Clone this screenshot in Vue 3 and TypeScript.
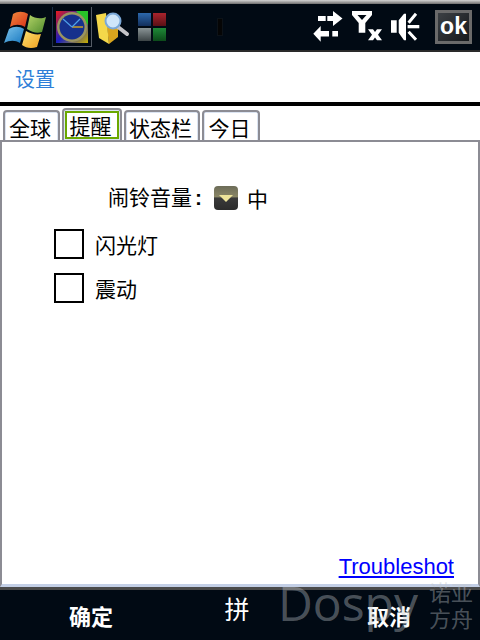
<template>
  <div class="screen">
    <div class="topstrip"></div>
    <header class="topbar">
      <svg class="start" width="50" height="44" viewBox="0 0 50 44">
        <defs>
          <filter id="soft"><feGaussianBlur stdDeviation="0.4" /></filter>
          <linearGradient id="flagR" x1="0" y1="0" x2="1" y2="1">
            <stop offset="0" stop-color="#f08a3c" />
            <stop offset="1" stop-color="#d8341c" />
          </linearGradient>
          <linearGradient id="flagG" x1="0" y1="0" x2="1" y2="1">
            <stop offset="0" stop-color="#b4d468" />
            <stop offset="1" stop-color="#4f8a2c" />
          </linearGradient>
          <linearGradient id="flagB" x1="0" y1="0" x2="1" y2="1">
            <stop offset="0" stop-color="#7cc4ec" />
            <stop offset="1" stop-color="#1878c0" />
          </linearGradient>
          <linearGradient id="flagY" x1="0" y1="0" x2="1" y2="1">
            <stop offset="0" stop-color="#fbe072" />
            <stop offset="1" stop-color="#f0a020" />
          </linearGradient>
        </defs>
        <g filter="url(#soft)">
          <path d="M11 9 C16 6 21 6 26 9 L23 22 C18 19 13 19 8 22 Z" fill="url(#flagR)" />
          <path d="M28 10 C33 14 40 14 44 12 L40 27 C35 29 30 27 25 24 Z" fill="url(#flagG)" />
          <path d="M7 24 C12 21 17 21 22 24 L18 38 C13 35 8 35 2 38 Z" fill="url(#flagB)" />
          <path d="M24 26 C29 29 35 30 39 29 L35 42 C29 44 24 43 20 40 Z" fill="url(#flagY)" />
        </g>
      </svg>
      <div class="task-active">
        <svg width="32" height="32" viewBox="0 0 32 32">
          <defs>
            <linearGradient id="clockBg" x1="0" y1="0" x2="1" y2="1">
              <stop offset="0" stop-color="#e81c1c" />
              <stop offset="0.5" stop-color="#1a20c0" />
              <stop offset="1" stop-color="#c8b000" />
            </linearGradient>
          </defs>
          <rect width="32" height="32" fill="url(#clockBg)" />
          <path d="M20 0 H32 V14 Z" fill="#28c428" />
          <circle cx="16" cy="16" r="15" fill="#9a9460" />
          <circle cx="16" cy="16" r="12.5" fill="#16308c" />
          <path d="M16 16 L27 16" stroke="#d8a820" stroke-width="1.4" />
          <path d="M16 16 L7 8 M16 16 L24 8" stroke="#4f9fe8" stroke-width="1.2" />
        </svg>
      </div>
      <svg class="finder" width="34" height="36" viewBox="0 0 34 36">
        <path d="M10 9 L22 14 V28 L13 35 Z" fill="#d9a51e" />
        <path d="M0 6 L10 4 L13 35 L3 29 Z" fill="#f4d84a" />
        <path d="M22 18 L31 25" stroke="#c4c4c8" stroke-width="4" stroke-linecap="round" />
        <circle cx="17" cy="12" r="7.5" fill="#cfe6fa" stroke="#7aa8d8" stroke-width="2" />
      </svg>
      <div class="tiles">
        <i class="tile t-blue"></i>
        <i class="tile t-red"></i>
        <i class="tile t-grey"></i>
        <i class="tile t-green"></i>
      </div>
      <span class="grip"></span>
      <div class="status">
        <svg width="30" height="34" viewBox="0 0 30 34" fill="#fff">
          <path d="M14.3 6 H20 V1 L29.5 8.5 L20 16 V11 H14.3 Z" />
          <path d="M5 6 H12.7 V11 H5 Z" />
          <path d="M0.3 23.7 L7.7 16 V21 H16 V26.5 H7.7 V31.7 Z" />
          <path d="M19.3 21 H25 V26.5 H19.3 Z" />
        </svg>
        <svg width="30" height="34" viewBox="0 0 30 34" fill="#fff">
          <path d="M0 1 H20 V5 L13.3 13 V22.7 H6.7 V13 L0 5 Z M5.5 5 L10 10 L14.5 5 Z" fill-rule="evenodd" />
          <path d="M16 19.3 H21 L23 22 L25 19.3 H30 L26 24.8 L30 30.3 H25 L23 27.6 L21 30.3 H16 L20 24.8 Z" />
        </svg>
        <svg width="29" height="34" viewBox="0 0 29 34" fill="#fff">
          <path d="M0 10.3 H5.7 V22.7 H0 Z M7.7 10.3 L13 3.7 H15 V30.3 H13 L7.7 22.7 Z" />
          <path d="M16.6 15 H28.3 V18.3 H16.6 Z" />
          <path d="M17.6 12.7 L25 3.7 M17.6 21.7 L25 29.7" stroke="#fff" stroke-width="3" fill="none" />
        </svg>
      </div>
      <div class="ok">ok</div>
    </header>

    <div class="title">设置</div>
    <div class="title-rule"></div>

    <nav class="tabs">
      <span
        v-for="t in tabs"
        :key="t.name"
        class="tab"
        :class="{ active: t.name === '提醒' }"
        :style="{ width: t.width + 'px' }"
      >
        <span class="tab-text">{{ t.name }}</span>
      </span>
    </nav>

    <main class="panel">
      <div class="volume">
        <span class="volume-label">闹铃音量<b>:</b></span>
        <span class="dropdown"><i></i></span>
        <span>中</span>
      </div>
      <label v-for="c in checks" :key="c" class="check">
        <span class="box"></span>
        <span>{{ c }}</span>
      </label>
      <a class="link">Troubleshot</a>
    </main>

    <footer class="softkeys">
      <span class="key">确定</span>
      <span class="ime">拼</span>
      <span class="key">取消</span>
    </footer>

    <div class="watermark">
      <span class="wm-word">Dospy</span>
      <span class="wm-cn">诺亚<br />方舟</span>
    </div>
  </div>
</template>

<script setup lang="ts">
const tabs = [
  { name: '全球', width: 57 },
  { name: '提醒', width: 60 },
  { name: '状态栏', width: 76 },
  { name: '今日', width: 58 }
]
const checks: string[] = ['闪光灯', '震动']
</script>

<style>
html,
body {
  margin: 0;
  background: #fff;
}
</style>

<style scoped>
.screen {
  position: relative;
  width: 480px;
  height: 640px;
  overflow: hidden;
  display: flex;
  flex-direction: column;
  font-family: "Noto Sans CJK SC", "Liberation Sans", sans-serif;
  color: #000;
  background: #fff;
}

.topstrip {
  height: 4px;
  flex: none;
  background: linear-gradient(#d4d4d4, #6e6e6e);
}

.topbar {
  height: 48px;
  flex: none;
  box-sizing: border-box;
  display: flex;
  align-items: center;
  background: #010a14;
  border-bottom: 2px solid #2a2a2a;
}

.start {
  margin-left: 2px;
}

.task-active {
  width: 40px;
  height: 40px;
  align-self: flex-start;
  margin-top: 3px;
  display: flex;
  align-items: center;
  justify-content: center;
  border: 1px solid #555c66;
  border-top: none;
  border-left-color: #1c3048;
  box-sizing: border-box;
}

.finder {
  margin-left: 4px;
}

.tiles {
  margin-left: 8px;
  display: grid;
  grid-template-columns: 13px 13px;
  grid-template-rows: 13px 13px;
  gap: 2px;
}

.tile {
  display: block;
}

.t-blue { background: linear-gradient(#2c68ac, #122f5c); }
.t-red { background: linear-gradient(#a8242c, #5a1016); }
.t-grey { background: linear-gradient(#8a9496, #3c4446); }
.t-green { background: linear-gradient(#1f8a38, #0c4a1a); }

.grip {
  width: 4px;
  height: 16px;
  margin-left: 51px;
  background: #050505;
  border: 1px solid #0c1218;
}

.status {
  margin-left: auto;
  display: flex;
  align-items: center;
  gap: 9px;
}

.ok {
  width: 37px;
  height: 34px;
  margin: 0 8px 0 15px;
  box-sizing: border-box;
  border: 3px solid #6a6a6a;
  background: linear-gradient(135deg, #3c4044, #16191c);
  color: #fff;
  font: bold 23px/27px "Liberation Sans", sans-serif;
  text-align: center;
}

.title {
  height: 50px;
  flex: none;
  padding-left: 15px;
  font-size: 20px;
  line-height: 53px;
  color: #2f7fd8;
}

.title-rule {
  height: 4px;
  flex: none;
  background: #000;
}

.tabs {
  height: 34px;
  flex: none;
  display: flex;
  align-items: flex-end;
  padding-left: 3px;
  box-sizing: border-box;
  gap: 2px;
}

.tab {
  height: 30px;
  box-sizing: border-box;
  padding: 1px 1px 0 0;
  border: 2px solid #8c8c94;
  border-bottom: none;
  border-radius: 4px 4px 0 0;
  background: #dbe4f2;
  font-size: 21px;
  line-height: 28px;
  text-align: center;
}

.tab-text {
  display: block;
  height: 28px;
  margin-left: 1px;
  padding-right: 3px;
  background: #fff;
}

.tab.active {
  height: 32px;
}

.tab.active .tab-text {
  box-sizing: border-box;
  height: 28px;
  line-height: 24px;
  border: 2px solid #6aa800;
}

.panel {
  position: relative;
  flex: 1;
  display: flex;
  flex-direction: column;
  box-sizing: border-box;
  border: 2px solid #8c8c94;
  border-bottom-color: #c3cfe6;
  border-bottom-width: 3px;
  padding: 40px 0 0 52px;
  font-size: 21px;
}

.volume {
  display: flex;
  align-items: center;
  height: 32px;
  margin-left: 54px;
  margin-bottom: 15px;
}

.volume-label {
  position: relative;
  top: -2px;
}

.volume-label b {
  font-family: "Liberation Sans", sans-serif;
  font-weight: bold;
  margin-left: 3px;
}

.dropdown {
  width: 24px;
  height: 24px;
  margin: 0 9px 0 12px;
  border-radius: 4px;
  background: linear-gradient(#6c6c58 0%, #8a8666 45%, #3a3a3a 50%, #2c2c2c 100%);
  display: flex;
  justify-content: center;
  align-items: center;
}

.dropdown i {
  width: 0;
  height: 0;
  border-left: 7px solid transparent;
  border-right: 7px solid transparent;
  border-top: 7px solid #eee49a;
}

.check {
  display: flex;
  align-items: center;
  gap: 11px;
  height: 30px;
  margin-bottom: 14px;
}

.box {
  width: 30px;
  height: 30px;
  box-sizing: border-box;
  border: 2px solid #000;
}

.link {
  position: absolute;
  right: 24px;
  bottom: 4px;
  font-family: "Liberation Sans", sans-serif;
  font-size: 22px;
  line-height: 26px;
  color: #0000ff;
  text-decoration: underline;
}

.softkeys {
  height: 53px;
  flex: none;
  display: flex;
  align-items: center;
  background: #010a14;
  border-top: 3px solid #4a4a4a;
  box-sizing: border-box;
  color: #fff;
  font-size: 22px;
  line-height: 28px;
}

.key {
  width: 182px;
  margin-top: -1px;
  text-align: center;
  font-weight: 700;
}

.ime {
  width: 110px;
  text-align: center;
  font-size: 25px;
  margin-top: -14px;
  margin-right: 6px;
}

.watermark {
  position: absolute;
  left: 278px;
  top: 574px;
  display: flex;
  color: rgba(190, 195, 200, 0.4);
  pointer-events: none;
}

.wm-word {
  font-family: "Open Sans", sans-serif;
  font-size: 48px;
  line-height: 58px;
}

.wm-cn {
  margin-left: 11px;
  margin-top: 4px;
  font-size: 22px;
  line-height: 26px;
  white-space: nowrap;
}
</style>
